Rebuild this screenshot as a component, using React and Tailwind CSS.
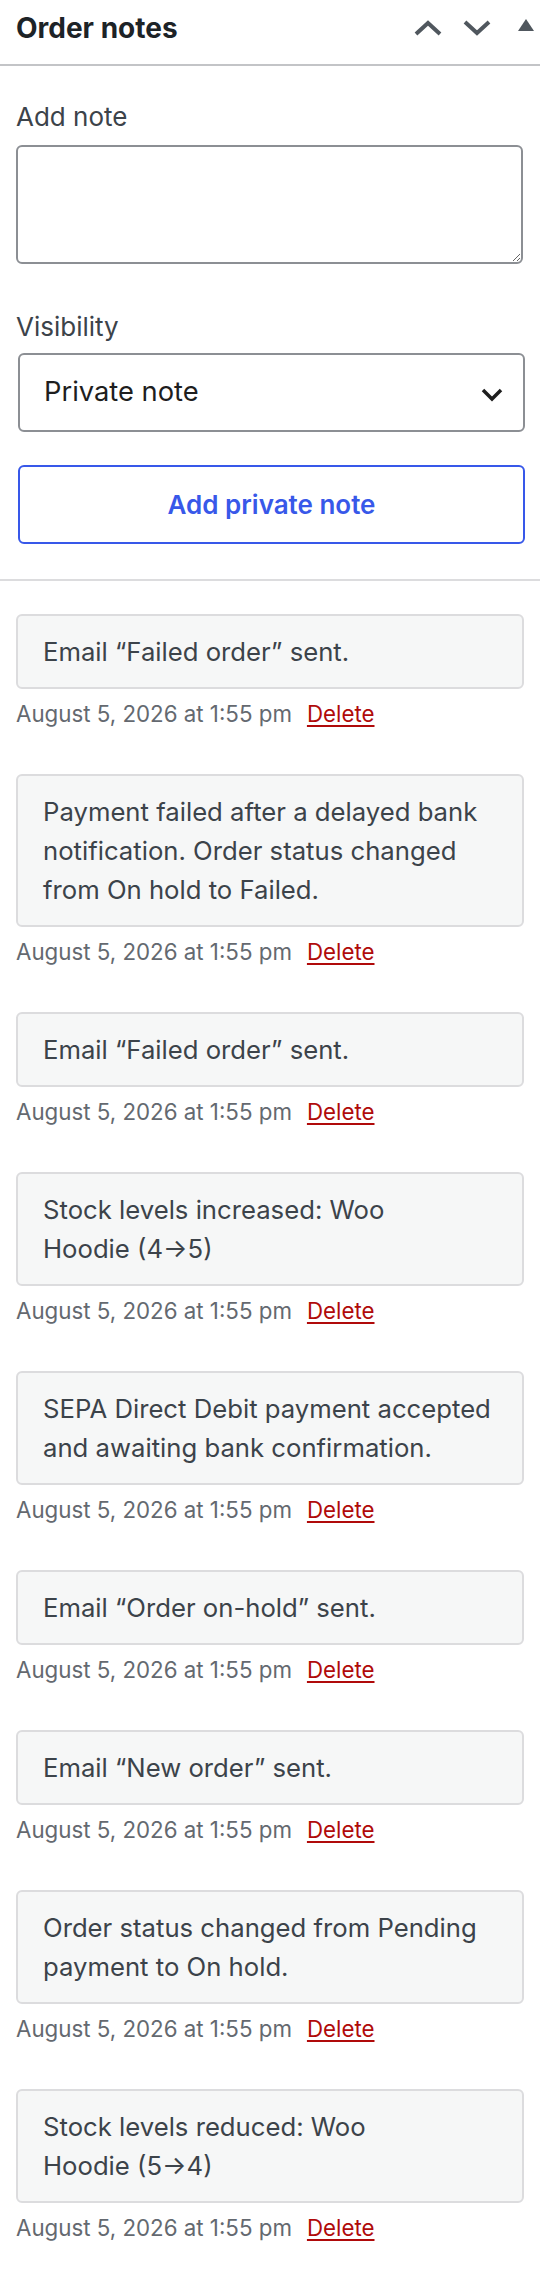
import React from "react";

const notes = [
  ["Email “Failed order” sent."],
  ["Payment failed after a delayed bank", "notification. Order status changed", "from On hold to Failed."],
  ["Email “Failed order” sent."],
  ["Stock levels increased: Woo", "Hoodie (4→5)"],
  ["SEPA Direct Debit payment accepted", "and awaiting bank confirmation."],
  ["Email “Order on-hold” sent."],
  ["Email “New order” sent."],
  ["Order status changed from Pending", "payment to On hold."],
  ["Stock levels reduced: Woo", "Hoodie (5→4)"],
];

function Note({ lines }) {
  return (
    <li className="mb-[44px]">
      <div className="rounded-[6px] border-2 border-[#dcdcde] bg-[#f6f7f7] py-[16px] pl-[25px] pr-[20px] text-[25.7px] leading-[39px] text-[#3c434a]">
        {lines.map((l, i) => (
          <div key={i} className="whitespace-nowrap">{l}</div>
        ))}
      </div>
      <div className="mt-[8px] flex items-center text-[22.3px] leading-[33px]">
        <span className="text-[#646970]">August 5, 2026 at 1:55 pm</span>
        <a href="#" className="ml-[15px] text-[#b00a0a] underline underline-offset-[3px] decoration-[2px]">Delete</a>
      </div>
    </li>
  );
}

export default function App() {
  return (
    <div className="w-[540px] min-h-[2280px] bg-white" style={{ fontFamily: "Inter, 'Liberation Sans', sans-serif" }}>
      <div className="flex h-[66px] items-start justify-between border-b-2 border-[#c3c4c7]">
        <h2 className="pl-[16px] pt-[9px] text-[28px] font-bold leading-[39px] text-[#1d2327]">Order notes</h2>
        <div className="flex items-center pr-[6px] pt-[20px]">
          <svg width="28" height="16" viewBox="0 0 28 16" className="block">
            <polyline points="2,14 14,3 26,14" fill="none" stroke="#50575e" strokeWidth="4" />
          </svg>
          <svg width="28" height="16" viewBox="0 0 28 16" className="ml-[21px] block">
            <polyline points="2,2 14,13 26,2" fill="none" stroke="#50575e" strokeWidth="4" />
          </svg>
          <svg width="16" height="16" viewBox="0 0 16 16" className="ml-[27px] block -mt-[3px]">
            <polygon points="0,12 8,0 16,12" fill="#50575e" />
          </svg>
        </div>
      </div>

      <div className="px-[16px] pt-[31px]">
        <label className="block text-[26px] leading-[39px] text-[#3c434a]">Add note</label>
        <textarea className="mt-[9px] block h-[119px] w-[507px] rounded-[6px] border-2 border-[#8c8f94] bg-white" />
        <label className="mt-[43px] block text-[26px] leading-[39px] text-[#3c434a]">Visibility</label>
        <div className="ml-[2px] mt-[7px] flex h-[79px] w-[507px] items-center justify-between rounded-[6px] border-2 border-[#8c8f94] pl-[24px] pr-[20px]">
          <span className="text-[27.3px] text-[#1e1e1e]">Private note</span>
          <svg width="22" height="14" viewBox="0 0 22 14" className="mt-[4px] block">
            <polyline points="2,2 11,11 20,2" fill="none" stroke="#1e1e1e" strokeWidth="3.5" />
          </svg>
        </div>
        <button className="ml-[2px] mt-[33px] flex h-[79px] w-[507px] items-center justify-center rounded-[6px] border-2 border-[#3858e9] bg-white text-[26px] font-semibold text-[#3858e9]">
          Add private note
        </button>
      </div>

      <div className="mt-[35px] h-[2px] w-full bg-[#dcdcde]" />

      <ul className="px-[16px] pt-[33px]">
        {notes.map((n, i) => (
          <Note key={i} lines={n} />
        ))}
      </ul>
    </div>
  );
}
